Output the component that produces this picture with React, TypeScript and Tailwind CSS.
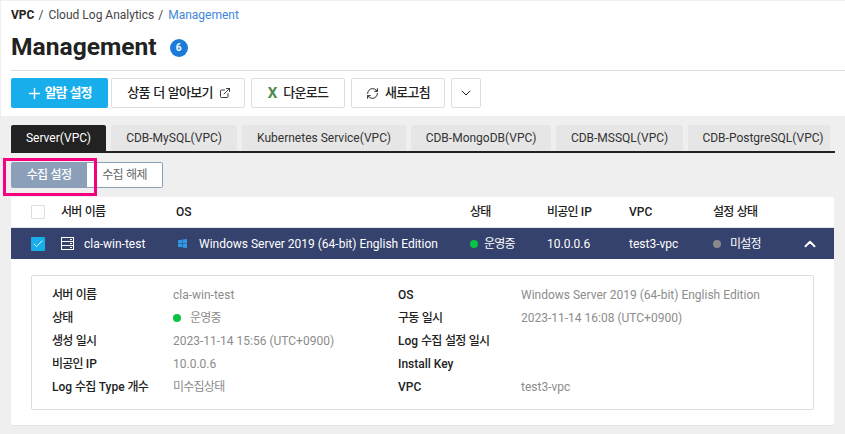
import { Plus, ExternalLink, RefreshCw, ChevronDown, ChevronUp, Check } from "lucide-react";

const font = "font-['Roboto','Noto_Sans_CJK_KR',sans-serif]";
const hangul = "tracking-[-0.75px] [word-spacing:1px]";

const tabs = [
  { label: "CDB-MySQL(VPC)", w: "w-[126px]" },
  { label: "Kubernetes Service(VPC)", w: "w-[164px]" },
  { label: "CDB-MongoDB(VPC)", w: "w-[140px]" },
  { label: "CDB-MSSQL(VPC)", w: "w-[127px]" },
  { label: "CDB-PostgreSQL(VPC)", w: "w-[142px] pl-2" },
];

const details = [
  ["서버 이름", "cla-win-test", "OS", "Windows Server 2019 (64-bit) English Edition"],
  ["상태", "", "구동 일시", "2023-11-14 16:08 (UTC+0900)"],
  ["생성 일시", "2023-11-14 15:56 (UTC+0900)", "Log 수집 설정 일시", ""],
  ["비공인 IP", "10.0.0.6", "Install Key", ""],
  ["Log 수집 Type 개수", "미수집상태", "VPC", "test3-vpc"],
];

const rowCols = "grid grid-cols-[30px_115px_294px_77px_82px_84px_1fr]";

// hangul runs are set tighter than the latin text around them
function Ko({ text }: { text: string }) {
  return (
    <>
      {text.split(/([가-힣]+(?: [가-힣]+)*)/).map((part, i) =>
        i % 2 === 1 ? (
          <span key={i} className={hangul}>
            {part}
          </span>
        ) : (
          part
        )
      )}
    </>
  );
}

function ToolButton({ className, children }: { className: string; children: React.ReactNode }) {
  return (
    <button className={`h-[30px] flex items-center justify-center gap-1.5 bg-white border border-[#dddddd] rounded-[2px] font-medium text-[13px] text-[#222222] ${className}`}>
      {children}
    </button>
  );
}

function ServerIcon() {
  return (
    <svg width="13" height="13" viewBox="0 0 13 13" fill="none" stroke="#ffffff" strokeWidth="1">
      <rect x="0.5" y="0.5" width="12" height="12" />
      <path d="M0.5 4.5H12.5M0.5 8.5H12.5" />
      <path d="M9 2.5H11M9 6.5H11M9 10.5H11" />
    </svg>
  );
}

function WindowsIcon() {
  return (
    <svg width="9" height="9" viewBox="0 0 9 9" fill="#2f9be8">
      <path d="M0 1.3L4 .7V4.2H0ZM4.5.6L9 0V4.2H4.5ZM0 4.7H4V8.3L0 7.7ZM4.5 4.7H9V9L4.5 8.4Z" />
    </svg>
  );
}

export default function App() {
  return (
    <div className={`${font} w-[845px] h-[434px] overflow-hidden bg-[#efefef] text-[12px] text-[#222222]`}>
      <header className="bg-white h-[115px] mt-px ml-px pl-2.5">
        <div className="flex items-center h-[28px] text-[12px] text-[#444444]">
          <span className="font-bold text-[#222222]">VPC</span>
          <span className="ml-1">/</span>
          <span className="ml-[5px]">Cloud Log Analytics</span>
          <span className="ml-1">/</span>
          <span className="ml-[5px] text-[#3f86d8]">Management</span>
        </div>
        <div className="flex items-center h-[42px] border-b border-[#dddddd]">
          <h1 className="text-[24.6px] font-bold text-[#222222] leading-none -mt-1">Management</h1>
          <span className="ml-[13px] -mt-1 w-[18px] h-[18px] rounded-full bg-[#1b7bd6] text-white text-[10px] font-bold flex items-center justify-center">6</span>
        </div>
        <div className="flex mt-[7px]">
          <button className="w-[97px] h-[30px] flex items-center justify-center gap-[2px] pr-0.5 bg-[#17aeeb] rounded-[2px] text-white text-[13px] font-bold">
            <Plus size={17} strokeWidth={2} />
            <span className="tracking-[-1.1px] [word-spacing:1px]">알람 설정</span>
          </button>
          <ToolButton className="w-[134px] ml-[3px] pl-0.5">
            <span className={hangul}>상품 더 알아보기</span>
            <ExternalLink size={12} strokeWidth={1.75} />
          </ToolButton>
          <ToolButton className="w-[94px] ml-1.5">
            <span className="text-[15px] font-bold text-[#4f8a4f]">X</span>
            <span className={hangul}>다운로드</span>
          </ToolButton>
          <ToolButton className="w-[94px] ml-1.5">
            <RefreshCw size={13} strokeWidth={1.75} />
            <span className={hangul}>새로고침</span>
          </ToolButton>
          <ToolButton className="w-[30px] ml-1.5">
            <ChevronDown size={16} strokeWidth={1.5} />
          </ToolButton>
        </div>
      </header>

      <div className="relative pl-[11px] pt-[9px]">
        <div className="w-[824px] flex items-end gap-[5px] border-b-2 border-[#222222] h-[28px]">
          <div className="w-[95px] h-[26px] bg-[#222222] text-white rounded-t-[2px] flex items-center justify-center">Server(VPC)</div>
          {tabs.map((t) => (
            <div key={t.label} className={`${t.w} h-[26px] bg-[#e6e6e6] text-[#333333] rounded-t-[2px] flex items-center justify-center`}>
              {t.label}
            </div>
          ))}
        </div>

        <div className="flex mt-[9px] h-[26px]">
          <button className={`w-[76px] bg-[#8ba0b8] text-white font-medium rounded-l-[2px] ${hangul}`}>수집 설정</button>
          <button className={`w-[76px] bg-white border border-[#8ba0b8] border-l-0 rounded-r-[2px] text-[#666666] ${hangul}`}>수집 해제</button>
        </div>

        <div className="absolute left-[3px] top-[42px] w-[94px] h-[38px] border-[3px] border-[#f5007e]" />

        <div className="mt-[9px] w-[823px] h-[229px] bg-white rounded-[2px] border-b border-[#e5e5e5]">
          <div className={`${rowCols} h-[31px] items-center pl-5 font-medium border-b border-[#e5e5e5]`}>
            <span className="w-3.5 h-3.5 bg-white border border-[#dddddd] rounded-[1px]" />
            <span><Ko text="서버 이름" /></span>
            <span>OS</span>
            <span><Ko text="상태" /></span>
            <span><Ko text="비공인 IP" /></span>
            <span>VPC</span>
            <span><Ko text="설정 상태" /></span>
          </div>
          <div className={`${rowCols} h-[31px] items-center pl-5 bg-[#35426e] text-white`}>
            <span className="w-3.5 h-3.5 bg-[#17aeeb] rounded-[1px] flex items-center justify-center">
              <Check size={12} strokeWidth={1.75} />
            </span>
            <span className="flex items-center gap-[10px]">
              <ServerIcon />
              cla-win-test
            </span>
            <span className="flex items-center gap-3 pl-0.5">
              <WindowsIcon />
              Windows Server 2019 (64-bit) English Edition
            </span>
            <span className="flex items-center gap-1.5">
              <span className="w-2 h-2 rounded-full bg-[#0ac244]" />
              <Ko text="운영중" />
            </span>
            <span>10.0.0.6</span>
            <span>test3-vpc</span>
            <span className="flex items-center">
              <span className="w-2 h-2 rounded-full bg-[#8a8a8a] mr-[9px]" />
              <Ko text="미설정" />
              <ChevronUp size={18} strokeWidth={2.5} className="ml-10" />
            </span>
          </div>

          <div className="mt-4 mx-5 h-[135px] border border-[#dddddd] rounded-[2px] pl-5 pt-[7px]">
            {details.map(([a, b, c, d]) => (
              <div key={a} className="grid grid-cols-[121px_225px_123px_1fr] h-[23px] items-center">
                <span className="font-medium"><Ko text={a} /></span>
                {a === "상태" ? (
                  <span className="flex items-center gap-[9px] text-[#8c8c8c]">
                    <span className="w-2 h-2 rounded-full bg-[#0ac244]" />
                    <Ko text="운영중" />
                  </span>
                ) : (
                  <span className="text-[#8c8c8c]"><Ko text={b} /></span>
                )}
                <span className="font-medium"><Ko text={c} /></span>
                <span className="text-[#8c8c8c]">{d}</span>
              </div>
            ))}
          </div>
        </div>
      </div>
    </div>
  );
}
